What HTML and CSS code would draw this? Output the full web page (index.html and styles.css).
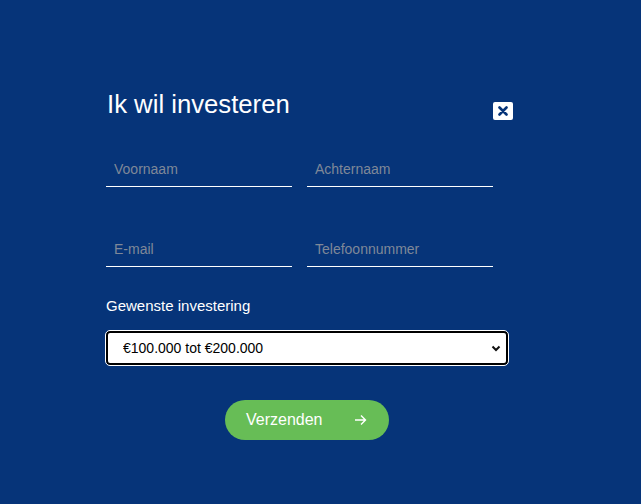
FILE: index.html
```html
<!DOCTYPE html>
<html lang="nl">
<head>
  <meta charset="UTF-8" />
  <meta name="viewport" content="width=device-width, initial-scale=1.0"/>
  <title>Ik wil investeren</title>
  <link rel="stylesheet" href="styles.css">
</head>
<body>
  <div class="modal">
    <div class="modal-header">
      <h2 class="modal-title">Ik wil investeren</h2>
      <button type="button" class="btn-close" aria-label="Sluiten">
        <svg width="10" height="10" viewBox="0 0 10 10"><path d="M1.5 1.5 L8.5 8.5 M8.5 1.5 L1.5 8.5" stroke="#063479" stroke-width="2.6" stroke-linecap="round"/></svg>
      </button>
    </div>
    <form class="invest-form">
      <div class="form-row">
        <input type="text" name="voornaam" placeholder="Voornaam">
        <input type="text" name="achternaam" placeholder="Achternaam">
      </div>
      <div class="form-row">
        <input type="email" name="email" placeholder="E-mail">
        <input type="tel" name="telefoon" placeholder="Telefoonnummer">
      </div>
      <label class="form-label" for="bedrag">Gewenste investering</label>
      <div class="select-wrap">
        <select id="bedrag" name="bedrag">
          <option>€100.000 tot €200.000</option>
          <option>€200.000 tot €500.000</option>
          <option>Meer dan €500.000</option>
        </select>
        <svg class="select-arrow" width="10" height="7" viewBox="0 0 10 7"><path d="M1.5 1.5 L5 5 L8.5 1.5" fill="none" stroke="#111" stroke-width="2"/></svg>
      </div>
      <div class="form-actions">
        <button type="submit" class="btn-submit">
          <span>Verzenden</span>
          <svg width="13" height="12" viewBox="0 0 13 12"><path d="M1 6 H11.5 M7 1.5 L11.5 6 L7 10.5" fill="none" stroke="#fff" stroke-width="1.4"/></svg>
        </button>
      </div>
    </form>
  </div>
</body>
</html>
```

FILE: styles.css
```css
* {
    margin: 0;
    padding: 0;
    box-sizing: border-box;
}
body {
    font-family: 'Liberation Sans', Arial, sans-serif;
    background: #063479;
    min-height: 100vh;
    padding: 89px 0 0 106px;
}
.modal {
    width: 408px;
}
.modal-header {
    display: flex;
    justify-content: space-between;
    align-items: flex-start;
    width: 408px;
    height: 30px;
}
.modal-title {
    font-size: 25.7px;
    line-height: 30px;
    font-weight: 400;
    color: #fff;
    padding-left: 1px;
}
.btn-close {
    margin-top: 13px;
    margin-right: 1px;
    width: 20px;
    height: 18px;
    background: #fff;
    border: none;
    border-radius: 2px;
    display: flex;
    align-items: center;
    justify-content: center;
    cursor: pointer;
}
.invest-form {
    margin-top: 33px;
}
.form-row {
    display: flex;
    gap: 15px;
    margin-bottom: 45px;
}
.form-row input {
    width: 186px;
    height: 35px;
    padding: 0 8px;
    background: transparent;
    border: none;
    border-bottom: 1px solid #fff;
    color: #fff;
    font-family: inherit;
    font-size: 14px;
    outline: none;
}
.form-row input::placeholder {
    color: #7f8898;
}
.form-label {
    display: block;
    margin-top: -15px;
    font-size: 15px;
    line-height: 18px;
    color: #fff;
}
.select-wrap {
    position: relative;
    width: 402px;
    margin-top: 16px;
}
.select-wrap select {
    appearance: none;
    -webkit-appearance: none;
    width: 100%;
    height: 34px;
    padding: 0 15px;
    border: 2px solid #000;
    border-radius: 4px;
    background: #fff;
    font-family: inherit;
    font-size: 14px;
    color: #000;
    outline: 1px solid #fff;
}
.select-arrow {
    position: absolute;
    right: 7px;
    top: 14px;
    pointer-events: none;
}
.form-actions {
    width: 402px;
    display: flex;
    justify-content: center;
    margin-top: 35px;
}
.btn-submit {
    width: 164px;
    height: 40px;
    border: none;
    border-radius: 20px;
    background: #67bd56;
    color: #fff;
    font-family: inherit;
    font-size: 16px;
    display: flex;
    align-items: center;
    justify-content: space-between;
    padding: 0 22px 0 21px;
    cursor: pointer;
}
```
